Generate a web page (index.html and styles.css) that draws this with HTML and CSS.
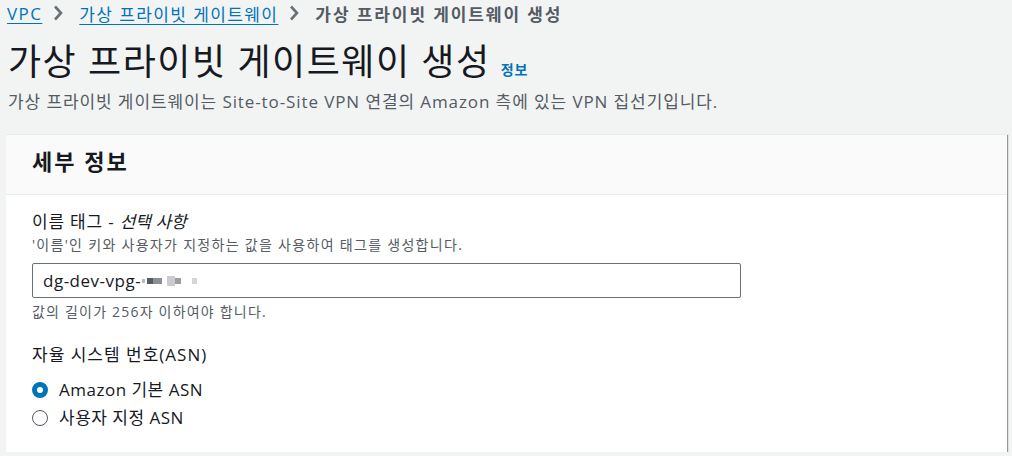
FILE: index.html
```html
<!DOCTYPE html>
<html lang="ko">
<head>
<meta charset="utf-8">
<link rel="stylesheet" href="styles.css">
</head>
<body>
<div class="page">
  <nav class="crumbs">
    <a class="crumb-link" href="#">VPC</a>
    <svg class="chev" width="10" height="16" viewBox="0 0 10 16"><path d="M2 1.5 L8 8 L2 14.5" fill="none" stroke="#687078" stroke-width="2.6"/></svg>
    <a class="crumb-link" href="#">가상 프라이빗 게이트웨이</a>
    <svg class="chev" width="10" height="16" viewBox="0 0 10 16"><path d="M2 1.5 L8 8 L2 14.5" fill="none" stroke="#687078" stroke-width="2.6"/></svg>
    <span class="crumb-current">가상 프라이빗 게이트웨이 생성</span>
  </nav>
  <header class="head">
    <h1 class="title">가상 프라이빗 게이트웨이 생성</h1>
    <a class="info" href="#">정보</a>
  </header>
  <p class="desc">가상 프라이빗 게이트웨이는 Site-to-Site VPN 연결의 Amazon 측에 있는 VPN 집선기입니다.</p>

  <section class="card">
    <div class="card-head"><h2>세부 정보</h2></div>
    <div class="card-body">
      <div class="field">
        <div class="label name">이름 태그 - <i>선택 사항</i></div>
        <div class="hint">'이름'인 키와 사용자가 지정하는 값을 사용하여 태그를 생성합니다.</div>
        <div class="input">
          <span>dg-dev-vpg-</span>
          <span class="blur">
            <b class="px p1"></b><b class="px p2"></b><b class="px p3"></b><b class="px p4"></b><b class="px p5"></b><b class="px p6"></b><b class="px p7"></b>
          </span>
        </div>
        <div class="constraint">값의 길이가 256자 이하여야 합니다.</div>
      </div>
      <div class="field asn">
        <div class="label">자율 시스템 번호(ASN)</div>
        <label class="radio"><span class="dot on"></span>Amazon 기본 ASN</label>
        <label class="radio"><span class="dot"></span>사용자 지정 ASN</label>
      </div>
    </div>
  </section>
</div>
</body>
</html>
```
FILE: styles.css
```css
* { box-sizing: border-box; }
html, body { margin: 0; padding: 0; }
body {
  background: #f2f3f3;
  font-family: "Open Sans", "Noto Sans CJK KR", sans-serif;
  color: #16191f;
}
.page { padding: 0 5px 0 6px; }
.crumbs {
  display: flex;
  align-items: center;
  height: 26px;
  padding-left: 1px;
  font-size: 17px;
  letter-spacing: 1.4px;
}
.crumb-link { color: #0073bb; text-decoration: underline; text-underline-offset: 3px; }
.chev { display: block; margin: 0 16px 0 11px; }
.crumb-current { color: #545b64; font-weight: 700; letter-spacing: 1.9px; }
.head {
  display: flex;
  align-items: baseline;
  gap: 10px;
  margin-top: 12px;
  padding-left: 2px;
}
.title {
  margin: 0;
  font-size: 36px;
  font-weight: 400;
  line-height: 48px;
  letter-spacing: 1.5px;
  color: #16191f;
}
.info {
  color: #0073bb;
  text-decoration: none;
  font-size: 14px;
  font-weight: 700;
  letter-spacing: 1px;
}
.desc {
  margin: 5px 0 0 2px;
  font-size: 17px;
  line-height: 22px;
  letter-spacing: 0.9px;
  color: #545b64;
}
.card {
  margin-top: 21px;
  background: #fff;
  border-top: 1px solid #eaeded;
  box-shadow: 1px 1px 1px 0 rgba(0,28,36,0.3), 1px 1px 1px 0 rgba(0,28,36,0.15);
}
.card-head {
  background: #fafafa;
  border-bottom: 1px solid #eaeded;
  height: 60px;
  padding: 11px 26px;
}
.card-head h2 {
  margin: 0;
  font-size: 22px;
  font-weight: 700;
  line-height: 30px;
  letter-spacing: 2px;
}
.card-body { padding: 14px 26px 20px; }
.label { font-size: 17px; line-height: 26px; letter-spacing: 1px; }
.label.name { letter-spacing: 0.8px; }
.label i { font-style: italic; letter-spacing: 0; }
.hint { font-size: 14px; line-height: 20px; letter-spacing: 1.3px; color: #545b64; }
.input {
  margin-top: 8px;
  width: 709px;
  height: 35px;
  border: 1px solid #687078;
  border-radius: 2px;
  display: flex;
  align-items: center;
  padding-left: 10px;
  font-size: 17px;
  letter-spacing: 0.5px;
  color: #16191f;
}
.blur { display: flex; align-items: center; margin-left: 1px; height: 10px; }
.px { display: block; height: 6px; }
.p1 { width: 3px; background: #b9bcbf; height: 4px; }
.p2 { width: 6px; background: #555b61; margin-left: 2px; }
.p3 { width: 9px; background: #8b9095; }
.p4 { width: 5px; background: #fff; }
.p5 { width: 8px; background: #c9cbce; height: 10px; }
.p6 { width: 6px; background: #9a9ea3; }
.p7 { width: 5px; background: #d3d5d7; margin-left: 11px; }
.constraint { margin-top: 4px; font-size: 14px; line-height: 20px; letter-spacing: 1.2px; color: #545b64; }
.asn { margin-top: 20px; }
.asn .label { margin-bottom: 8px; }
.radio {
  display: flex;
  align-items: center;
  gap: 11px;
  font-size: 17px;
  letter-spacing: 0.5px;
  line-height: 24px;
  height: 28px;
}
.dot {
  width: 16px;
  height: 16px;
  border-radius: 50%;
  border: 1.5px solid #545b64;
  background: #fff;
}
.dot.on { border: 5px solid #0073bb; }
```
